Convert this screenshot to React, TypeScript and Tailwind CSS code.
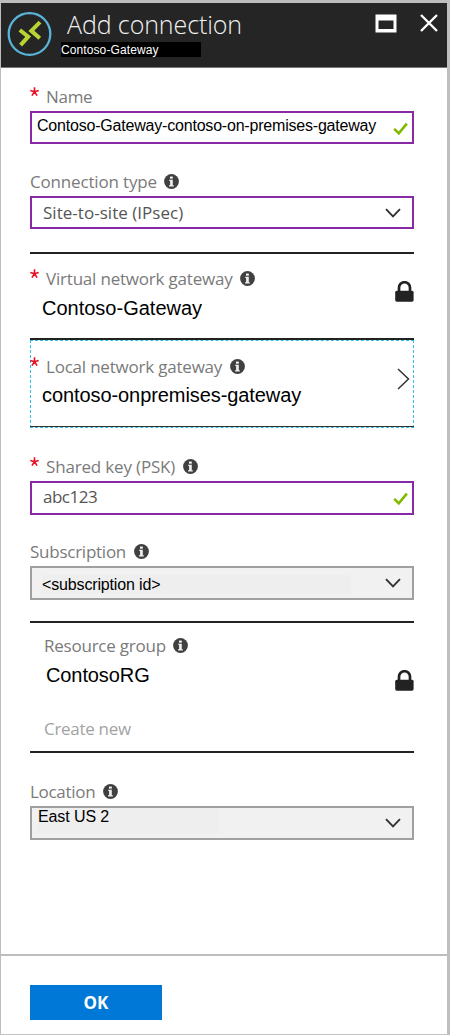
import type { ReactNode } from "react";

const segoe = "font-['Open_Sans',sans-serif]";
const arial = "font-['Liberation_Sans',Arial,sans-serif]";

function Info() {
  return (
    <svg className="ml-[7.5px] h-[15px] w-[15px] shrink-0" viewBox="0 0 15 15">
      <circle cx="7.5" cy="7.5" r="7.4" fill="#404040" />
      <rect x="6" y="2.6" width="2.8" height="2" fill="#fff" />
      <path d="M5.2 5.8h3.6v5.4h1v1.2H5v-1.2h1.1V7H5.2z" fill="#eee" />
    </svg>
  );
}

function Check() {
  return (
    <svg className="h-[14px] w-[15px]" viewBox="0 0 15 14">
      <path d="M1.2 6.8L5.8 11.4L13.8 1.6" fill="none" stroke="#7fba00" strokeWidth="2.6" />
    </svg>
  );
}

function ChevronDown() {
  return (
    <svg className="h-[10px] w-[16px]" viewBox="0 0 16 10">
      <path d="M1 1.2L8 8.4L15 1.2" fill="none" stroke="#333" strokeWidth="1.9" />
    </svg>
  );
}

function Lock() {
  return (
    <svg className="h-[21px] w-[19px]" viewBox="0 0 19 21">
      <path d="M4 10V6.7a5.5 5.5 0 0 1 11 0V10" fill="none" stroke="#222" strokeWidth="2.7" />
      <rect x="0.2" y="9.7" width="18.4" height="11" rx="1.6" fill="#222" />
    </svg>
  );
}

function Star() {
  return (
    <svg className="mt-[2px] mr-[7px] h-[9px] w-[9px] shrink-0" viewBox="0 0 9 9">
      <path d="M4.5 4.8V0.2M4.5 4.8L0.3 3.4M4.5 4.8L8.7 3.4M4.5 4.8L1.9 8.6M4.5 4.8L7.1 8.6" fill="none" stroke="#e81123" strokeWidth="1.6" />
    </svg>
  );
}

function Label({ children, required, info = true, track }: { children: ReactNode; required?: boolean; info?: boolean; track: string }) {
  return (
    <div className="flex h-[27px] items-start pt-px">
      {required && <Star />}
      <span className={`${segoe} ${track} whitespace-nowrap text-[17px] leading-6 text-[#7a7a7a]`}>{children}</span>
      {info && <span className="mt-1"><Info /></span>}
    </div>
  );
}

export default function App() {
  return (
    <div className="flex h-[1035px] w-[450px] flex-col border-t-[3px] border-r-[3px] border-b border-l border-t-[#bdbdbd] border-r-[#bebebe] border-b-[#c4c4c4] border-l-[#bdbdbd] bg-white">
      <header className="flex h-[65px] shrink-0 border-b border-b-[#777] bg-[#252525]">
        <svg className="mt-[9px] ml-[6px] h-[45px] w-[45px] shrink-0" viewBox="0 0 45 45">
          <circle cx="22.5" cy="22" r="20.8" fill="none" stroke="#59b4d9" strokeWidth="2.3" />
          <path d="M12.8 18L21.2 24.7L13.6 33.2M33 10.2L24.3 18.8L32.8 26.2" fill="none" stroke="#b8d432" strokeWidth="4" />
        </svg>
        <div className="ml-[9px] flex flex-col">
          <h1 className={`${segoe} ml-[6px] h-[38px] text-[25px] leading-[42px] font-light tracking-[-0.1px] whitespace-nowrap text-[#f2f2f2]`}>Add connection</h1>
          <div className={`${arial} mt-[1px] h-[15px] w-[140px] bg-black text-[12px] leading-[16px] tracking-[0.1px] text-white`}>Contoso-Gateway</div>
        </div>
        <div className="ml-auto flex pt-[11px] pr-[9px]">
          <svg className="h-[19px] w-[22px]" viewBox="0 0 22 19">
            <path d="M0.5 0.5H21.5V18.5H0.5zM3.5 6.5V15H18.5V6.5z" fill="#fff" fillRule="evenodd" />
          </svg>
          <svg className="ml-[23px] h-[18px] w-[18px]" viewBox="0 0 18 18">
            <path d="M1 1L17 17M17 1L1 17" stroke="#fff" strokeWidth="2.4" />
          </svg>
        </div>
      </header>

      <main className="flex h-[886px] w-[413px] shrink-0 flex-col pt-4 pl-[29px]">
        <section className="h-[85px] shrink-0">
          <Label required info={false} track="tracking-[-0.3px]">Name</Label>
          <div className="flex h-[33px] justify-between border-2 border-[#882aa5] pr-[4px] pl-[5px]">
            <span className={`${arial} text-[16px] leading-[25px] tracking-[-0.2px] text-black`}>Contoso-Gateway-contoso-on-premises-gateway</span>
            <span className="mt-[9px]"><Check /></span>
          </div>
        </section>

        <section className="h-[83px] shrink-0">
          <Label track="tracking-[-0.17px]">Connection type</Label>
          <div className="flex h-[33px] items-center justify-between border-2 border-[#882aa5] pr-[11px] pl-[11px]">
            <span className={`${segoe} text-[17px] leading-[29px] tracking-[0.03px] text-[#555]`}>Site-to-site (IPsec)</span>
            <ChevronDown />
          </div>
        </section>

        <section className="flex h-[86px] shrink-0 justify-between border-t-2 border-[#222] pt-3">
          <div>
            <Label required track="tracking-[-0.2px]">Virtual network gateway</Label>
            <p className={`${arial} mt-[3px] ml-3 text-[20px] leading-6 text-black`}>Contoso-Gateway</p>
          </div>
          <div className="pt-[15px]"><Lock /></div>
        </section>

        <section className="h-[116px] shrink-0">
          <div className="h-[90px] border-t-2 border-[#222]">
            <div className="flex h-[88px] justify-between border border-dashed border-[#2fc0e8] pt-[13px] pr-[3px]">
              <div className="-ml-px">
                <Label required track="tracking-[-0.21px]">Local network gateway</Label>
                <p className={`${arial} mt-[2px] ml-3 text-[20px] leading-6 tracking-[-0.08px] text-black`}>contoso-onpremises-gateway</p>
              </div>
              <svg className="mt-[14px] h-[22px] w-[13px]" viewBox="0 0 13 22">
                <path d="M1 1L11.5 11L1 21" fill="none" stroke="#333" strokeWidth="1.5" />
              </svg>
            </div>
            <div className="-mt-[2px] h-px bg-[#333]" />
          </div>
        </section>

        <section className="h-[85px] shrink-0">
          <Label required track="tracking-[-0.17px]">Shared key (PSK)</Label>
          <div className="flex h-[34px] justify-between border-2 border-[#882aa5] pr-[4px] pl-[11px]">
            <span className={`${segoe} text-[17px] leading-[28px] tracking-[-0.5px] text-[#555]`}>abc123</span>
            <span className="mt-[9px]"><Check /></span>
          </div>
        </section>

        <section className="h-[82px] shrink-0">
          <Label track="tracking-[-0.25px]">Subscription</Label>
          <div className="flex h-[34px] items-start justify-between border-2 border-[#a0a0a0] bg-[#f1f1f1] pr-[11px] pl-[10px]">
            <span className={`${arial} mt-[7px] h-[18px] w-[309px] bg-[#eee] text-[16px] leading-[19px] tracking-[-0.15px] text-black`}>&lt;subscription id&gt;</span>
            <span className="flex pt-[10px]"><ChevronDown /></span>
          </div>
        </section>

        <section className="flex h-[132px] shrink-0 justify-between border-y-2 border-[#222] pt-[10px]">
          <div className="ml-[14px]">
            <Label track="tracking-[-0.23px]">Resource group</Label>
            <p className={`${arial} mt-[3px] ml-[2px] text-[20px] leading-6 tracking-[-0.1px] text-black`}>ContosoRG</p>
            <p className={`${segoe} mt-[30px] text-[17px] leading-6 tracking-[-0.3px] text-[#a3a3a3]`}>Create new</p>
          </div>
          <div className="pt-[37px]"><Lock /></div>
        </section>

        <section className="mt-[26px] shrink-0">
          <Label track="tracking-[-0.3px]">Location</Label>
          <div className="flex h-[34px] items-start justify-between border-2 border-[#a0a0a0] bg-[#f1f1f1] pr-[11px] pl-[6px]">
            <span className={`${arial} h-[25px] w-[180px] bg-[#eee] text-[16px] leading-[17px] tracking-[-0.1px] text-black`}>East US 2</span>
            <span className="flex pt-[10px]"><ChevronDown /></span>
          </div>
        </section>
      </main>

      <footer className="flex-1 border-t-2 border-[#bdbdbd] pt-[29px] pl-[29px]">
        <button className={`${segoe} h-[35px] w-[132px] bg-[#0078d7] text-[17px] leading-[35px] font-bold text-white`}>OK</button>
      </footer>
    </div>
  );
}
